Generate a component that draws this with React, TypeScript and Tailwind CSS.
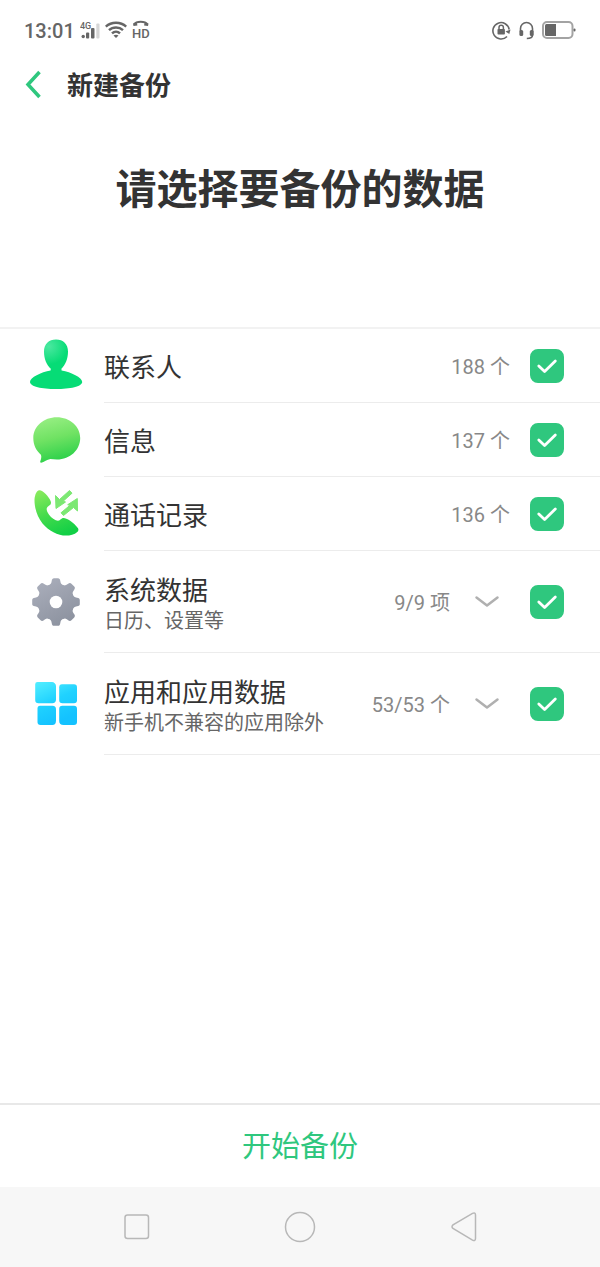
import type { ReactNode } from "react";

type Item = {
  id: string;
  name: string;
  desc?: string;
  count: string;
  icon: ReactNode;
};

function ContactIcon() {
  return (
    <svg className="w-14 h-14" viewBox="0 0 56 56" aria-hidden="true">
      <defs>
        <radialGradient id="contact" cx="0.36" cy="0.14" r="0.36">
          <stop offset="0" stopColor="#4be8a0" />
          <stop offset="1" stopColor="#06dc76" />
        </radialGradient>
      </defs>
      <path
        d="M28 1.600c7.200 0 12 4.600 12 12.200 0 7-2.600 13.200-6.600 17l.2 1.800c9.500 1.600 20.600 7 20.600 11.400C54.200 48.600 42 51 28 51S2 48.600 2 44c0-4.400 11-9.800 20.600-11.400l.2-1.800C18.600 27 16 20.800 16 13.800 16 6.200 20.800 1.600 28 1.600z"
        fill="url(#contact)"
      />
    </svg>
  );
}

function MessageIcon() {
  return (
    <svg className="w-14 h-14" viewBox="0 0 56 56" aria-hidden="true">
      <defs>
        <linearGradient id="message" x1="0.35" y1="0" x2="0.6" y2="1">
          <stop offset="0" stopColor="#96ee82" />
          <stop offset="0.45" stopColor="#70e263" />
          <stop offset="1" stopColor="#25cf47" />
        </linearGradient>
      </defs>
      <path
        d="M28.800 5.300C41.800 5.300 52.200 14.300 52.200 26S42.500 47.500 28.800 47.500c-2.200 0-4.400-.4-6.400-.5-3.400.4-6.200 3.200-9.200 3.700-.9.100-1.200-.6-.9-1.400.7-2 1.500-4.800.6-6.600C8.200 38.700 5.300 32.800 5.300 26 5.300 14.300 15.800 5.300 28.800 5.300z"
        fill="url(#message)"
      />
    </svg>
  );
}

function CallIcon() {
  return (
    <svg className="w-14 h-14" viewBox="0 0 56 56" aria-hidden="true">
      <defs>
        <linearGradient id="call" x1="0.2" y1="0" x2="0.6" y2="1">
          <stop offset="0" stopColor="#86ea5c" />
          <stop offset="0.5" stopColor="#44db4c" />
          <stop offset="1" stopColor="#12cf46" />
        </linearGradient>
      </defs>
      <path
        d="M11 4.300c3-.8 10 6 11.800 11.200.7 2.400-.4 3.600-2.200 4.600-2.200 1.400-2.400 3.400-1.200 5.800 2 3.800 4.800 6.600 8.400 8.400 2 .9 3.400.5 4.600-.7 1.700-1.900 3.400-2.100 6-.9 4.600 2 9.400 6.200 11.600 9.600.8 1.400.4 2.600-.7 3.600C46.500 48.600 42 49.600 38 49.600c-8 0-17.500-5-23.500-12.200C9 30.700 6.500 21.500 6.500 14.500c0-4 1.500-9.500 4.500-10.200z"
        fill="url(#call)"
      />
      <g fill="#7ce873" stroke="#7ce873" strokeLinejoin="round">
        <path d="M27.500 9.500l4 4L41.500 4.500l2.500 2.700-8.800 8 2.300.8-9.500 6.500z" />
        <path d="M49.300 12.500l.2 12.500-4-3.500-10 8-2.500-2.700 8.700-7.300-2-.8z" />
      </g>
    </svg>
  );
}

function GearIcon() {
  const teeth = [0, 45, 90, 135, 180, 225, 270, 315];
  return (
    <svg className="w-14 h-14" viewBox="0 0 56 56" aria-hidden="true">
      <defs>
        <linearGradient id="gear" gradientUnits="userSpaceOnUse" x1="14" y1="6" x2="40" y2="52">
          <stop offset="0" stopColor="#a9adba" />
          <stop offset="1" stopColor="#8b919e" />
        </linearGradient>
        <mask id="hole">
          <circle cx="28" cy="28" r="18.500" fill="#fff" />
          {teeth.map((deg) => (
            <path
              key={deg}
              d="M19.500 12c3-1 3.800-2.500 4.200-5 .2-2 1-2.800 2.300-2.800h4c1.300 0 2.100.8 2.300 2.800.4 2.500 1.200 4 4.200 5z"
              fill="#fff"
              transform={`rotate(${deg} 28 28)`}
            />
          ))}
          <circle cx="28" cy="28" r="6.300" fill="#000" />
        </mask>
      </defs>
      <rect width="56" height="56" fill="url(#gear)" mask="url(#hole)" />
    </svg>
  );
}

function AppsIcon() {
  return (
    <svg className="w-14 h-14" viewBox="0 0 56 56" aria-hidden="true">
      <defs>
        <linearGradient id="apps" gradientUnits="userSpaceOnUse" x1="12" y1="6" x2="30" y2="46">
          <stop offset="0" stopColor="#4fecff" />
          <stop offset="0.5" stopColor="#20d2ff" />
          <stop offset="1" stopColor="#14c2ff" />
        </linearGradient>
      </defs>
      <g fill="url(#apps)">
        <path d="M9.500 6H24q1.500 0 2.700 1.300Q28 8.600 28 10v13.500q0 3.700-3.700 3.700H10.500Q7.200 27.200 7.200 24V8.300Q7.200 6 9.500 6z" />
        <path d="M34 8.200h12q3 0 3 3v13q0 3-3 3H34.500q-3.300 0-3.300-3.300V11.200q0-3 2.800-3z" />
        <path d="M12 29.800h12.500q3.500 0 3.500 3.500v11.500q0 4.200-3.700 4.200H12.500q-3 0-3-3V32.500q0-2.700 2.500-2.700z" />
        <path d="M34.300 29.800H46q3 0 3 3V46q0 3-3 3H35.500q-4.300 0-4.300-4V33q0-3.200 3.100-3.200z" />
      </g>
    </svg>
  );
}

const items: Item[] = [
  { id: "contacts", name: "联系人", count: "188 个", icon: <ContactIcon /> },
  { id: "messages", name: "信息", count: "137 个", icon: <MessageIcon /> },
  { id: "calls", name: "通话记录", count: "136 个", icon: <CallIcon /> },
  { id: "system", name: "系统数据", desc: "日历、设置等", count: "9/9 项", icon: <GearIcon /> },
  { id: "apps", name: "应用和应用数据", desc: "新手机不兼容的应用除外", count: "53/53 个", icon: <AppsIcon /> },
];

function StatusBar() {
  return (
    <div className="flex h-[60px] items-center justify-between px-6 text-[#666]">
      <div className="flex items-center gap-[5px]">
        <span className="pt-[2px] text-xl font-medium leading-6">13:01</span>
        {/* 信号 */}
        <svg className="w-5 h-5" viewBox="0 0 20 20" fill="currentColor" aria-hidden="true">
          <text x="0" y="9" fontSize="9" fontWeight="500">4G</text>
          <circle cx="3.200" cy="16.500" r="1.700" />
          <rect x="6" y="12.500" width="3.200" height="6" rx="1" />
          <rect x="11" y="8" width="3.500" height="10.500" rx="1" />
          <rect x="16.300" y="3.500" width="3.200" height="15" rx="1" fill="#d6d6d6" />
        </svg>
        <svg className="w-[22px] h-5" viewBox="0 0 22 20" fill="none" stroke="currentColor" strokeWidth="2.400" aria-hidden="true">
          <path d="M.8 6.700C6.500 1.500 15.500 1.500 21.200 6.700M4 10.200c3.900-3.700 10.100-3.700 14 0M7 13.400c2.300-2.200 5.700-2.200 8 0" />
          <path d="M8.500 15.500c1.500-1.100 3.500-1.100 5 0L11 18z" fill="currentColor" stroke="none" />
        </svg>
        <svg className="w-5 h-5" viewBox="0 0 20 20" fill="currentColor" aria-hidden="true">
          <path d="M2 4.500C4.500.8 13 .8 15.500 4.500" fill="none" stroke="currentColor" strokeWidth="2" />
          <path d="M1 3.500l4-.5.400 2.500L1.500 6z" />
          <path d="M16.500 3.500l-4-.5-.4 2.500 3.900.5z" />
          <text x="0" y="18" fontSize="13" fontWeight="500">HD</text>
        </svg>
      </div>
      <div className="flex items-center gap-[7px]">
        <svg className="w-5 h-5" viewBox="0 0 20 20" aria-hidden="true">
          <path d="M15 16.500A8.200 8.200 0 1 1 17.200 9.500" fill="none" stroke="currentColor" strokeWidth="1.600" />
          <path d="M13.500 11.500l3.800 2.600 1.200-4.600z" fill="currentColor" />
          <rect x="5.500" y="9" width="7.400" height="5.600" rx="0.800" fill="currentColor" />
          <path d="M7 9V7.500a2.200 2.200 0 0 1 4.400 0V9" fill="none" stroke="currentColor" strokeWidth="1.500" />
        </svg>
        <svg className="w-4 h-5" viewBox="0 0 16 20" aria-hidden="true">
          <path d="M1.500 11V8.500a6 6 0 0 1 12 0V15q0 3.500-5.700 3.500" fill="none" stroke="currentColor" strokeWidth="1.600" />
          <rect x="0.400" y="10" width="3.800" height="6" rx="1.500" fill="currentColor" />
          <rect x="10.800" y="10" width="3.800" height="6" rx="1.500" fill="currentColor" />
        </svg>
        <svg className="w-[34px] h-5" viewBox="0 0 34 20" aria-hidden="true">
          <rect x="1" y="2" width="29.500" height="16" rx="4" fill="#fff" stroke="#a3a3a3" strokeWidth="2" />
          <path d="M4.500 4H14v12H4.500Q3 16 3 14.500v-9Q3 4 4.500 4z" fill="currentColor" />
          <rect x="31.500" y="8.500" width="2" height="3" rx="1" fill="currentColor" />
        </svg>
      </div>
    </div>
  );
}

function Row({ item }: { item: Item }) {
  return (
    <li className="flex items-center gap-5 pl-7">
      {item.icon}
      <div
        className={`flex flex-1 items-center border-b border-[#ececec] pr-9 ${
          item.desc ? "h-[102px]" : "h-[74px]"
        }`}
      >
        <label htmlFor={item.id} className={`flex flex-1 flex-col ${item.desc ? "pt-[6px]" : "pt-1"}`}>
          <span className="text-[26px] leading-8 text-[#333]">{item.name}</span>
          {item.desc && <span className="text-xl leading-7 text-[#666]">{item.desc}</span>}
        </label>
        <span className="pt-[2px] text-xl leading-7 text-[#888]">{item.count}</span>
        {item.desc && (
          <button type="button" aria-label={`展开${item.name}`} className="ml-6 mr-[10px]">
            <svg className="w-[26px] h-4" viewBox="0 0 26 16" fill="none" stroke="#b0b0b0" strokeWidth="2.500" strokeLinecap="round" strokeLinejoin="round">
              <path d="M2.500 3.500L13 11.500l10.500-8" />
            </svg>
          </button>
        )}
        <span className="ml-5 grid">
          <input
            id={item.id}
            type="checkbox"
            defaultChecked
            className="peer col-start-1 row-start-1 h-[34px] w-[34px] appearance-none rounded-lg border-2 border-[#ccc] checked:border-[#2fc77e] checked:bg-[#2fc77e]"
          />
          <svg
            className="pointer-events-none col-start-1 row-start-1 hidden h-[34px] w-[34px] peer-checked:block"
            viewBox="0 0 34 34"
            fill="none"
            stroke="#fff"
            strokeWidth="2.800"
            strokeLinecap="round"
            strokeLinejoin="round"
          >
            <path d="M8.800 17l5.800 5.600L25.300 12" />
          </svg>
        </span>
      </div>
    </li>
  );
}

export default function App() {
  return (
    <div className="flex min-h-screen flex-col bg-white font-['Roboto','Noto_Sans_CJK_SC',sans-serif]">
      <StatusBar />

      {/* 标题栏 */}
      <header className="flex h-[50px] items-center gap-[23px] pl-6">
        <button type="button" aria-label="返回">
          <svg className="w-5 h-8" viewBox="0 0 20 32" fill="none" stroke="#2fc77e" strokeWidth="3.500">
            <path d="M15.500 3L4 15.500 15.500 28" />
          </svg>
        </button>
        <span className="pt-[2px] text-[26px] font-bold leading-8 text-[#333]">新建备份</span>
      </header>

      <h1 className="px-6 pb-[107px] pt-[50px] text-center text-[41px] font-bold leading-[60px] text-[#333]">
        请选择要备份的数据
      </h1>

      {/* 备份项目 */}
      <ul className="flex-1 border-t-2 border-[#f2f2f2]">
        {items.map((item) => (
          <Row key={item.id} item={item} />
        ))}
      </ul>

      <button
        type="button"
        className="h-[84px] border-t-2 border-[#e8e8e8] pt-[2px] text-[29px] leading-10 text-[#2fc77e]"
      >
        开始备份
      </button>

      {/* 系统导航键 */}
      <nav className="grid h-20 grid-cols-[1fr_56px_1fr] items-center bg-[#f7f7f7]">
        <button type="button" aria-label="最近任务" className="justify-self-center">
          <svg className="w-8 h-8" viewBox="0 0 32 32" fill="none" stroke="#b8b8b8" strokeWidth="1.500">
            <rect x="5" y="4" width="23.500" height="23.500" rx="2.500" />
          </svg>
        </button>
        <button type="button" aria-label="主屏幕" className="justify-self-center">
          <svg className="w-8 h-8" viewBox="0 0 32 32" fill="none" stroke="#b8b8b8" strokeWidth="1.500">
            <circle cx="16" cy="16" r="14.500" />
          </svg>
        </button>
        <button type="button" aria-label="返回上一级" className="justify-self-center">
          <svg className="w-8 h-8" viewBox="0 0 32 32" fill="none" stroke="#b8b8b8" strokeWidth="1.500">
            <path d="M24.500 2.400Q27.500 1.200 27.500 4v23.500q0 3-3 1.600L5 17.500q-2-1.800 0-3.600z" />
          </svg>
        </button>
      </nav>
    </div>
  );
}
